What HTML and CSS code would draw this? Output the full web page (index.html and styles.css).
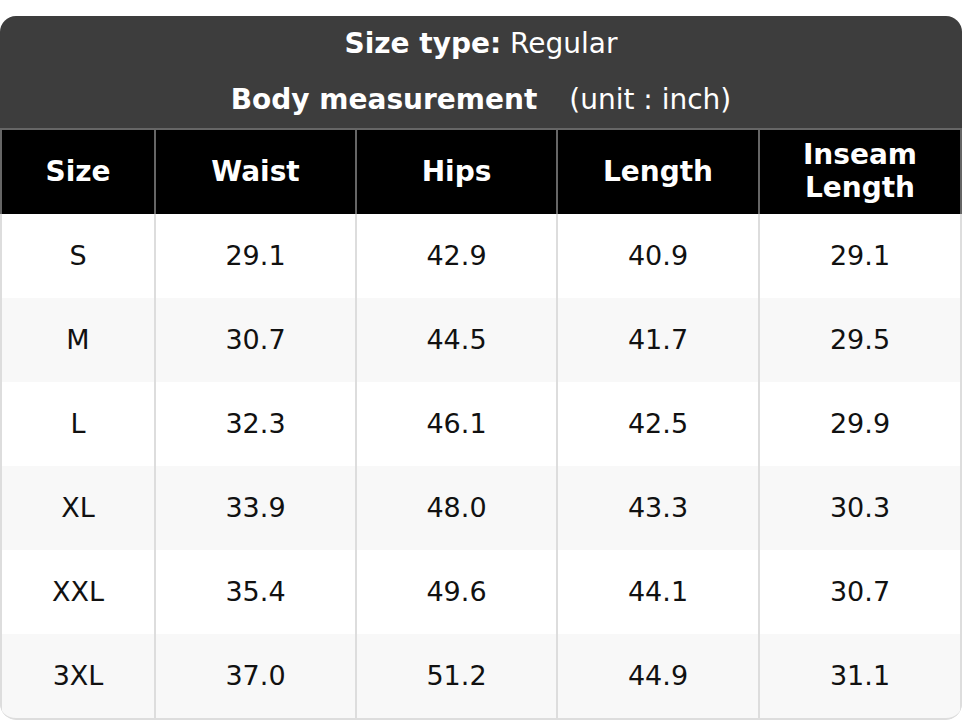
FILE: index.html
```html
<!DOCTYPE html>
<html>
<head>
<meta charset="utf-8">
<link rel="stylesheet" href="styles.css">
</head>
<body>
<div class="card">
  <div class="title">
    <div class="line"><b>Size type:</b> Regular</div>
    <div class="line"><b>Body measurement</b><span class="unit">(unit : inch)</span></div>
  </div>
  <div class="grid head">
    <div class="cell">Size</div>
    <div class="cell">Waist</div>
    <div class="cell">Hips</div>
    <div class="cell">Length</div>
    <div class="cell">Inseam<br>Length</div>
  </div>
  <div class="body">
    <div class="grid row"><div class="cell">S</div><div class="cell">29.1</div><div class="cell">42.9</div><div class="cell">40.9</div><div class="cell">29.1</div></div>
    <div class="grid row alt"><div class="cell">M</div><div class="cell">30.7</div><div class="cell">44.5</div><div class="cell">41.7</div><div class="cell">29.5</div></div>
    <div class="grid row"><div class="cell">L</div><div class="cell">32.3</div><div class="cell">46.1</div><div class="cell">42.5</div><div class="cell">29.9</div></div>
    <div class="grid row alt"><div class="cell">XL</div><div class="cell">33.9</div><div class="cell">48.0</div><div class="cell">43.3</div><div class="cell">30.3</div></div>
    <div class="grid row"><div class="cell">XXL</div><div class="cell">35.4</div><div class="cell">49.6</div><div class="cell">44.1</div><div class="cell">30.7</div></div>
    <div class="grid row alt"><div class="cell">3XL</div><div class="cell">37.0</div><div class="cell">51.2</div><div class="cell">44.9</div><div class="cell">31.1</div></div>
  </div>
</div>
</body>
</html>
```
FILE: styles.css
```css
html, body {
  margin: 0;
  padding: 0;
  background: #fff;
}
body {
  padding-top: 16px;
  font-family: "DejaVu Sans", Verdana, sans-serif;
  font-size: 27px;
}
.card {
  width: 962px;
  border-radius: 16px;
  overflow: hidden;
}
.title {
  background: #3d3d3d;
  color: #fff;
  font-size: 28px;
  height: 112px;
  display: flex;
  flex-direction: column;
  align-items: center;
}
.line {
  height: 56px;
  line-height: 55px;
  text-align: center;
}
.unit {
  margin-left: 32px;
}
.grid {
  display: grid;
  grid-template-columns: 152px 199px 199px 200px 1fr;
  column-gap: 2px;
  padding: 0 2px;
}
.head {
  background: #666;
  padding-top: 2px;
}
.head .cell {
  background: #000;
  color: #fff;
  font-weight: bold;
  font-size: 28px;
  line-height: 33px;
}
.cell {
  height: 84px;
  padding-bottom: 2px;
  box-sizing: border-box;
  display: flex;
  align-items: center;
  justify-content: center;
  text-align: center;
}
.body {
  border-bottom: 2px solid #ddd;
  border-radius: 0 0 16px 16px;
  overflow: hidden;
  background: #ddd;
}
.row {
  background: #ddd;
  color: #111;
}
.row .cell {
  background: #fff;
}
.row.alt .cell {
  background: #f8f8f8;
}
```
